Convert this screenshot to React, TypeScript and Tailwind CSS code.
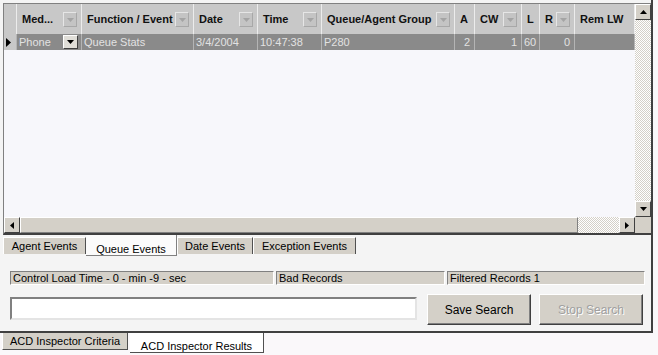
type Col = {
  key: string;
  w: number;
  label: string;
  dd?: boolean;
  align?: "left" | "right";
  value?: string;
};

const COLS: Col[] = [
  { key: "med", w: 65, label: "Med...", dd: true, value: "Phone" },
  { key: "fn", w: 112, label: "Function / Event", dd: true, value: "Queue Stats" },
  { key: "date", w: 64, label: "Date", dd: true, value: "3/4/2004" },
  { key: "time", w: 64, label: "Time", dd: true, value: "10:47:38" },
  { key: "queue", w: 133, label: "Queue/Agent Group", dd: true, value: "P280" },
  { key: "a", w: 20, label: "A", align: "right", value: "2" },
  { key: "cw", w: 47, label: "CW", dd: true, align: "right", value: "1" },
  { key: "l", w: 18, label: "L", value: "60" },
  { key: "r", w: 35, label: "R", dd: true, align: "right", value: "0" },
  { key: "rem", w: 60, label: "Rem LW", value: "" },
];

function Tri({ dir, color = "#000" }: { dir: "up" | "down" | "left" | "right"; color?: string }) {
  const pts = {
    up: "0,4 7,4 3.5,0",
    down: "0,0 7,0 3.5,4",
    left: "4,0 4,7 0,3.5",
    right: "0,0 0,7 4,3.5",
  }[dir];
  const vertical = dir === "up" || dir === "down";
  return (
    <svg width={vertical ? 7 : 4} height={vertical ? 4 : 7} viewBox={vertical ? "0 0 7 4" : "0 0 4 7"}>
      <polygon points={pts} fill={color} />
    </svg>
  );
}

function ArrowBtn({ dir }: { dir: "up" | "down" | "left" | "right" }) {
  return (
    <div className="w-[16px] h-[16px] shrink-0 flex items-center justify-center bg-[#d4d0c8] border border-t-white border-l-white border-r-[#404040] border-b-[#404040]">
      <Tri dir={dir} />
    </div>
  );
}

const checker =
  "bg-[repeating-conic-gradient(#d4d0c8_0%_25%,#ffffff_0%_50%)] bg-[length:2px_2px]";

function HeaderCell({ col }: { col: Col }) {
  return (
    <div
      className="relative h-full shrink-0 flex items-center pl-[5px] border-r border-[#ececec] overflow-hidden"
      style={{ width: col.w }}
    >
      <span className="font-bold text-[11px] text-[#111] whitespace-nowrap">{col.label}</span>
      {col.dd && (
        <div className="absolute right-[4px] top-[8px] w-[14px] h-[15px] flex items-center justify-center bg-[#c4c4c4] border border-t-[#e6e6e6] border-l-[#e6e6e6] border-r-[#a8a8a8] border-b-[#a8a8a8]">
          <Tri dir="down" color="#a4a4a4" />
        </div>
      )}
    </div>
  );
}

function DataCell({ col }: { col: Col }) {
  return (
    <div
      className={`relative h-full shrink-0 flex items-center px-[2px] border-r border-[#b4b4b4] overflow-hidden ${
        col.align === "right" ? "justify-end pr-[4px]" : ""
      }`}
      style={{ width: col.w }}
    >
      <span className="text-[11px] text-[#e2e2e2] whitespace-nowrap">{col.value}</span>
      {col.key === "med" && (
        <div className="absolute right-[3px] top-[1px] w-[15px] h-[14px] flex items-center justify-center bg-[#e0ded8] border border-t-white border-l-white border-r-[#404040] border-b-[#404040]">
          <Tri dir="down" />
        </div>
      )}
    </div>
  );
}

function SubTab({ label, w, active }: { label: string; w: number; active?: boolean }) {
  if (active) {
    return (
      <div
        className="h-[21px] shrink-0 pt-[6px] text-center bg-[#fbfbfb] border-r border-b border-[#808080] text-[11px] text-black whitespace-nowrap"
        style={{ width: w }}
      >
        {label}
      </div>
    );
  }
  return (
    <div
      className="h-[17px] mt-[2px] shrink-0 flex items-center justify-center bg-[#d4d0c8] border-t border-l border-white border-r border-r-[#505050] text-[11px] text-black whitespace-nowrap"
      style={{ width: w }}
    >
      {label}
    </div>
  );
}

function StatusCell({ w, text }: { w: number; text: string }) {
  return (
    <div
      className="h-[14px] shrink-0 flex items-center pl-[2px] bg-[#d4d0c8] border border-t-[#808080] border-l-[#808080] border-r-white border-b-white text-[11px] text-black whitespace-nowrap overflow-hidden"
      style={{ width: w }}
    >
      {text}
    </div>
  );
}

export default function App() {
  return (
    <div className="w-[658px] h-[355px] bg-[#faf8fa] font-['Liberation_Sans',Arial,sans-serif] overflow-hidden">
      <div className="w-[653px] h-[333px] flex flex-col bg-[#f4f4f4] border-r-2 border-b-2 border-[#404040]">
        {/* grid */}
        <div className="ml-[3px] mt-[3px] h-[232px] shrink-0 flex flex-col border-t border-l border-[#808080] border-b-2 border-b-[#404040]">
          <div className="flex h-[213px]">
            <div className="w-[631px] h-full flex flex-col bg-[#f7f7fb] overflow-hidden">
              <div className="flex h-[30px] shrink-0 bg-[#c8c8c8]">
                <div className="w-[13px] h-full shrink-0 border-r border-[#ececec]" />
                {COLS.map((c) => (
                  <HeaderCell key={c.key} col={c} />
                ))}
              </div>
              <div className="flex h-[16px] shrink-0 bg-[#8a8a8a]">
                <div className="w-[13px] h-full shrink-0 flex items-center pl-[2px] border-r border-[#b4b4b4] bg-[#c8c8c8]">
                  <svg width="5" height="9" viewBox="0 0 5 9">
                    <polygon points="0,0 0,9 5,4.5" fill="#000" />
                  </svg>
                </div>
                {COLS.map((c) => (
                  <DataCell key={c.key} col={c} />
                ))}
              </div>
            </div>
            {/* vertical scrollbar */}
            <div className="w-[16px] h-full flex flex-col">
              <ArrowBtn dir="up" />
              <div className={`flex-1 ${checker}`} />
              <ArrowBtn dir="down" />
            </div>
          </div>
          {/* horizontal scrollbar */}
          <div className="flex h-[16px]">
            <ArrowBtn dir="left" />
            <div className="w-[558px] h-full bg-[#d4d0c8] border border-t-white border-l-white border-r-[#808080] border-b-[#808080]" />
            <div className={`w-[41px] h-full ${checker}`} />
            <ArrowBtn dir="right" />
            <div className="w-[16px] h-full bg-[#d4d0c8]" />
          </div>
        </div>

        {/* sub tabs */}
        <div className="flex items-start pl-[3px] h-[21px] shrink-0">
          <SubTab label="Agent Events" w={83} />
          <SubTab label="Queue Events" w={91} active />
          <SubTab label="Date Events" w={76} />
          <SubTab label="Exception Events" w={103} />
        </div>

        {/* status bar */}
        <div className="flex gap-[2px] ml-[10px] mt-[15px] shrink-0">
          <StatusCell w={264} text="Control Load Time - 0 - min -9 - sec" />
          <StatusCell w={169} text="Bad Records" />
          <StatusCell w={198} text="Filtered Records 1" />
        </div>

        {/* search row */}
        <div className="flex items-start ml-[10px] mt-[9px] shrink-0">
          <input
            className="mt-[3px] w-[407px] h-[23px] bg-white border-2 border-t-[#808080] border-l-[#808080] border-r-[#e4e4e4] border-b-[#e4e4e4] outline-none"
            defaultValue=""
          />
          <button className="ml-[10px] w-[104px] h-[31px] bg-[#d4d0c8] border border-t-white border-l-white border-r-[#404040] border-b-[#404040] shadow-[inset_-1px_-1px_0_#808080] text-[12px] text-black">
            Save Search
          </button>
          <button className="ml-[8px] w-[104px] h-[31px] bg-[#d4d0c8] border border-t-white border-l-white border-r-[#404040] border-b-[#404040] shadow-[inset_-1px_-1px_0_#808080] text-[12px] text-[#a0a0a0] [text-shadow:1px_1px_0_#fff]">
            Stop Search
          </button>
        </div>
      </div>

      {/* bottom tabs */}
      <div className="flex items-start pl-[2px]">
        <div className="w-[126px] h-[17px] shrink-0 flex items-center justify-center bg-[#d4d0c8] border-l border-white border-r border-b border-r-[#505050] border-b-[#505050] text-[11px] text-black whitespace-nowrap">
          ACD Inspector Criteria
        </div>
        <div className="ml-[2px] w-[134px] h-[20px] shrink-0 pt-[5px] text-center bg-white border-r border-b border-[#505050] text-[11px] text-black whitespace-nowrap">
          ACD Inspector Results
        </div>
      </div>
    </div>
  );
}
